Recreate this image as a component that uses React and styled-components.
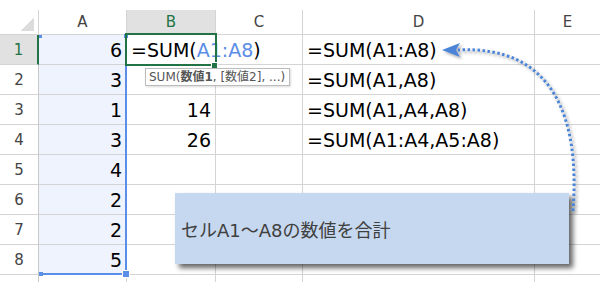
import React from "react";
import styled, { createGlobalStyle, css } from "styled-components";

const GlobalStyle = createGlobalStyle`
  html, body { margin: 0; padding: 0; background: #fff; }
  body { font-family: "DejaVu Sans", "Noto Sans CJK JP", sans-serif; }
`;

const GREEN = "#217346";
const BLUE = "#5b8ee6";
const LINE = "#d4d4d4";

const Sheet = styled.div`
  position: relative;
  width: 600px;
  height: 282px;
  overflow: hidden;
  padding-top: 10px;
  box-sizing: border-box;
  background: #fff;
`;

const Grid = styled.div`
  display: grid;
  grid-template-columns: 39px 88px 89px 87px 232px 66px;
  grid-template-rows: 25px repeat(9, 30px);
`;

const Corner = styled.div`
  border-right: 1px solid ${LINE};
  border-bottom: 1px solid ${LINE};
  box-sizing: border-box;
  background: linear-gradient(135deg, transparent 0 62%, #dcdcdc 62% 100%) no-repeat;
  background-size: 18px 18px;
  background-position: 16px 3px;
`;

const ColHead = styled.div`
  display: flex;
  align-items: center;
  justify-content: center;
  box-sizing: border-box;
  border-right: 1px solid ${LINE};
  border-bottom: 1px solid ${LINE};
  font-size: 15px;
  color: #444;
  ${(p) =>
    p.$active &&
    css`
      background: #e1e1e1;
      color: ${GREEN};
      border-bottom: 2px solid ${GREEN};
    `}
`;

const RowHead = styled.div`
  display: flex;
  align-items: center;
  justify-content: center;
  box-sizing: border-box;
  border-right: 1px solid #c8c8c8;
  border-bottom: 1px solid ${LINE};
  font-size: 15px;
  color: #444;
  ${(p) =>
    p.$active &&
    css`
      background: #e1e1e1;
      color: ${GREEN};
      border-right: 2px solid ${GREEN};
    `}
`;

const Cell = styled.div`
  display: flex;
  align-items: center;
  justify-content: ${(p) => (p.$right ? "flex-end" : "flex-start")};
  box-sizing: border-box;
  padding: 0 4px;
  border-right: 1px solid ${LINE};
  border-bottom: 1px solid ${LINE};
  font-size: 19px;
  color: #000;
  white-space: nowrap;
  overflow: visible;
  background: ${(p) => (p.$selected ? "#eef3fd" : "transparent")};
`;

const Ref = styled.span`
  color: ${BLUE};
`;

const RangeBox = styled.div`
  position: absolute;
  left: 39px;
  top: 35px;
  width: 88px;
  height: 240px;
  box-sizing: border-box;
  border-right: 2px solid ${BLUE};
  border-bottom: 2px solid ${BLUE};
`;

const Handle = styled.div`
  position: absolute;
  background: ${(p) => p.$color};
  width: ${(p) => p.$size}px;
  height: ${(p) => p.$size}px;
  left: ${(p) => p.$x}px;
  top: ${(p) => p.$y}px;
  ${(p) => p.$ring && css`box-shadow: 0 0 0 1px #fff;`}
`;

const ActiveCell = styled.div`
  position: absolute;
  left: 125px;
  top: 33px;
  width: 92px;
  height: 33px;
  box-sizing: border-box;
  border: 2px solid ${GREEN};
`;

const Tip = styled.div`
  position: absolute;
  left: 145px;
  top: 68px;
  height: 18px;
  box-sizing: border-box;
  padding: 0 4px 0 3px;
  background: #fff;
  border: 1px solid #bcbcbc;
  box-shadow: 1px 1px 2px rgba(0, 0, 0, 0.15);
  font-size: 12px;
  line-height: 16px;
  color: #555;
  white-space: nowrap;
  b { font-weight: bold; }
`;

const Callout = styled.div`
  position: absolute;
  left: 175px;
  top: 193px;
  width: 394px;
  height: 71px;
  display: flex;
  align-items: center;
  box-sizing: border-box;
  padding-left: 6px;
  background: #c6d8ef;
  box-shadow: 4px 4px 5px rgba(0, 0, 0, 0.6);
  font-size: 18px;
  color: #404040;
`;

const ArrowLayer = styled.svg`
  position: absolute;
  left: 0;
  top: 0;
  pointer-events: none;
`;

const cols = ["A", "B", "C", "D", "E"];
const data = [
  ["6", "B1", "", "=SUM(A1:A8)"],
  ["3", "", "", "=SUM(A1,A8)"],
  ["1", "14", "", "=SUM(A1,A4,A8)"],
  ["3", "26", "", "=SUM(A1:A4,A5:A8)"],
  ["4", "", "", ""],
  ["2", "", "", ""],
  ["2", "", "", ""],
  ["5", "", "", ""],
  ["", "", "", ""],
];

function CellContent({ value }) {
  if (value === "B1") {
    return (
      <>
        =SUM(<Ref>A1:A8</Ref>)
      </>
    );
  }
  return value;
}

export default function App() {
  return (
    <>
      <GlobalStyle />
      <Sheet>
        <Grid>
          <Corner />
          {cols.map((c) => (
            <ColHead key={c} $active={c === "B"}>
              {c}
            </ColHead>
          ))}
          {data.map((row, i) => (
            <React.Fragment key={i}>
              {/* row 9 sits below the visible edge, only its grid lines show */}
              <RowHead $active={i === 0}>{i < 8 ? i + 1 : ""}</RowHead>
              <Cell $right $selected={i < 8}>{row[0]}</Cell>
              <Cell $right={row[1] !== "B1"}>
                <CellContent value={row[1]} />
              </Cell>
              <Cell>{row[2]}</Cell>
              <Cell>{row[3]}</Cell>
              <Cell />
            </React.Fragment>
          ))}
        </Grid>

        <RangeBox />
        <Handle $color={BLUE} $size={3} $x={39} $y={35} />
        <Handle $color={BLUE} $size={4} $x={124} $y={34} />
        <Handle $color={BLUE} $size={4} $x={39} $y={272} />
        <Handle $color={BLUE} $size={6} $x={123} $y={271} $ring />

        <ActiveCell />
        <Handle $color={GREEN} $size={5} $x={212} $y={63} $ring />

        <Tip>
          SUM(<b>数値1</b>, [数値2], ...)
        </Tip>

        <Callout>セルA1～A8の数値を合計</Callout>

        <ArrowLayer width="600" height="282" viewBox="0 0 600 282">
          <defs>
            <filter id="sh" x="-20%" y="-20%" width="140%" height="140%">
              <feDropShadow dx="2" dy="2" stdDeviation="1.4" floodColor="#000" floodOpacity="0.35" />
            </filter>
          </defs>
          <g filter="url(#sh)">
            <path
              d="M 573 211 C 580 120, 555 45, 458 50"
              fill="none"
              stroke="#4c84d6"
              strokeWidth="3"
              strokeDasharray="2.5 2.5"
            />
            <polygon points="442,50 460,43 456,50 460,57" fill="#4c84d6" />
          </g>
        </ArrowLayer>
      </Sheet>
    </>
  );
}
